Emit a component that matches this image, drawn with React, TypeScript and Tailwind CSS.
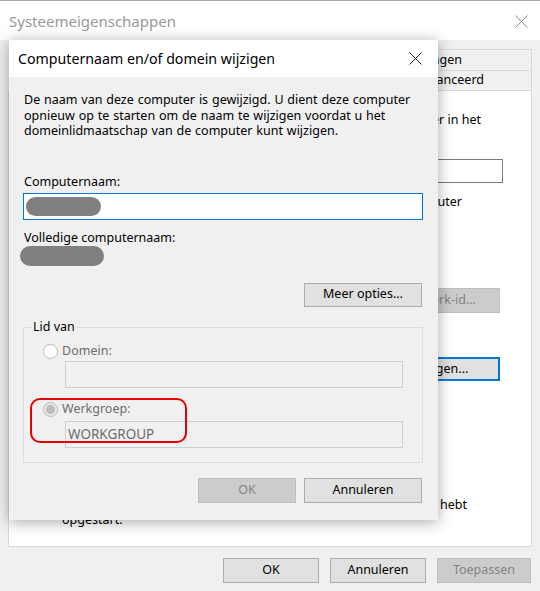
import React from 'react';

type BtnProps = {
  label: string;
  className?: string;
  disabled?: boolean;
  focused?: boolean;
};

// Classic Win32 push button
const Btn: React.FC<BtnProps> = ({ label, className = '', disabled, focused }) => {
  let look = 'bg-[#e1e1e1] border border-[#adadad] text-black';
  if (disabled) look = 'bg-[#cccccc] border border-[#bfbfbf] text-[#838383]';
  if (focused) look = 'bg-[#e1e1e1] border-2 border-[#0078d7] text-black';
  return (
    <div className={`flex items-center justify-center leading-none ${look} ${className}`}>
      {label}
    </div>
  );
};

const CloseIcon: React.FC<{ color: string }> = ({ color }) => (
  <svg width="13" height="13" viewBox="0 0 13 13">
    <path d="M0.5 0.5 L12.5 12.5 M12.5 0.5 L0.5 12.5" stroke={color} strokeWidth="1" fill="none" />
  </svg>
);

// Redacted value (blurred grey pill)
const Pill: React.FC<{ className: string }> = ({ className }) => (
  <div className={`rounded-full bg-[#808080] blur-[0.4px] ${className}`} />
);

// Row of the tab page whose left part sits under the dialog: only the right end shows
const PageRow: React.FC<{ className?: string; children: React.ReactNode }> = ({ className = '', children }) => (
  <div className={`ml-[428px] flex justify-end overflow-hidden whitespace-nowrap ${className}`}>{children}</div>
);

export default function App() {
  return (
    <div className="relative w-[540px] h-[591px] overflow-hidden bg-[#f0f0f0] font-['Noto_Sans',sans-serif] text-[12.5px] text-black">
      {/* Systeemeigenschappen window */}
      <div className="flex flex-col h-full">
        <div className="h-[2px] bg-white border-t border-[#a9a9a9] flex">
          <div className="ml-[48px] w-px h-[1px] bg-[#a9a9a9] -mt-px" />
        </div>
        <div className="h-[38px] bg-white flex items-center justify-between pl-[9px] pr-[12px]">
          <span className="text-[15px] text-[#999999]">Systeemeigenschappen</span>
          <CloseIcon color="#8a8a8a" />
        </div>

        <div className="flex-1 flex flex-col px-[8px] pt-[9px]">
          {/* tab rows */}
          <div className="h-[21px] ml-[429px] flex justify-end overflow-hidden whitespace-nowrap">
            <div className="shrink-0 border-t border-l border-r border-[#d9d9d9] pl-[40px] pr-[69px] flex items-center">Externe instellingen</div>
          </div>
          <div className="h-[20px] border-t border-[#d9d9d9] ml-[429px] flex justify-end overflow-hidden whitespace-nowrap">
            <div className="shrink-0 border-l border-r border-[#d9d9d9] pl-[60px] pr-[47px] flex items-center">Geavanceerd</div>
          </div>

          {/* tab page */}
          <div className="h-[457px] bg-white border border-[#d9d9d9] flex flex-col leading-[16px]">
            <PageRow className="mt-[21px] pr-[50px]">
              <span className="shrink-0">Windows gebruikt de volgende gegevens om deze computer in het</span>
            </PageRow>
            <div className="h-[16px]" />
            <div className="mt-[15px] flex justify-end pr-[28px]">
              <div className="w-[330px] h-[24px] border border-[#7a7a7a] bg-white" />
            </div>
            <PageRow className="mt-[11px] pr-[69px]">
              <span className="shrink-0">Bijvoorbeeld: Keukencomputer of Marieke's computer</span>
            </PageRow>
            <div className="mt-[78px] flex justify-end pr-[31px]">
              <Btn label="Netwerk-id..." disabled className="w-[123px] h-[25px]" />
            </div>
            <div className="mt-[44px] flex justify-end pr-[31px]">
              <Btn label="Wijzigen..." focused className="w-[123px] h-[24px]" />
            </div>
            <div className="mt-[116px] leading-[15px]">
              <PageRow className="pr-[64px]">
                <span className="shrink-0">De wijzigingen worden van kracht nadat u de computer opnieuw hebt</span>
              </PageRow>
              <div className="pl-[53px]">opgestart.</div>
            </div>
          </div>

          <div className="mt-[11px] flex justify-end gap-[11px] pr-[1px]">
            <Btn label="OK" className="w-[96px] h-[25px]" />
            <Btn label="Annuleren" className="w-[96px] h-[25px]" />
            <Btn label="Toepassen" disabled className="w-[94px] h-[25px]" />
          </div>
        </div>
      </div>

      {/* Computernaam en/of domein wijzigen dialog */}
      <div className="absolute left-[9px] top-[40px] w-[429px] h-[480px] flex flex-col bg-[#f0f0f0] shadow-[0_2px_14px_rgba(0,0,0,0.35)]">
        <div className="h-[37px] bg-white flex items-center justify-between pl-[9px] pr-[16px]">
          <span className="text-[14.2px]">Computernaam en/of domein wijzigen</span>
          <CloseIcon color="#1a1a1a" />
        </div>

        <div className="flex flex-col pl-[14px] pr-[15px] pt-[15px]">
          <div className="pl-[1px] leading-[15.5px] [word-spacing:0.6px]">
            De naam van deze computer is gewijzigd. U dient deze computer
            <br />
            opnieuw op te starten om de naam te wijzigen voordat u het
            <br />
            domeinlidmaatschap van de computer kunt wijzigen.
          </div>

          <div className="mt-[35px] pl-[1px] leading-[16px]">Computernaam:</div>
          <div className="mt-[3px] h-[27px] border border-[#0078d7] bg-white flex items-center pl-[2px]">
            <Pill className="w-[75px] h-[19px]" />
          </div>

          <div className="mt-[10px] pl-[1px] leading-[16px]">Volledige computernaam:</div>
          <Pill className="-ml-[3px] w-[84px] h-[20px]" />

          <div className="mt-[17px] flex justify-end pr-[1px]">
            <Btn label="Meer opties..." className="w-[118px] h-[24px]" />
          </div>

          {/* Lid van group box */}
          <div className="relative mt-[20px] h-[136px] border border-[#dcdcdc] flex flex-col pt-[16px] pl-[19px]">
            <span className="absolute -top-[9px] left-[7px] bg-[#f0f0f0] px-[2px] leading-[16px]">Lid van</span>

            <div className="h-[16px] flex items-center gap-[4px] text-[#6d6d6d]">
              <div className="w-[15px] h-[15px] rounded-full border border-[#bcbcbc] bg-white" />
              <span>Domein:</span>
            </div>
            <div className="mt-[1px] ml-[22px] w-[338px] h-[27px] border border-[#cfcfcf] bg-[#f0f0f0]" />

            <div className="mt-[14px] h-[16px] flex items-center gap-[4px] text-[#6d6d6d]">
              <div className="w-[15px] h-[15px] rounded-full border border-[#bcbcbc] bg-[#e6e6e6] flex items-center justify-center">
                <div className="w-[9px] h-[9px] rounded-full bg-[#bcbcbc]" />
              </div>
              <span>Werkgroep:</span>
            </div>
            <div className="mt-[3px] ml-[22px] w-[338px] h-[27px] border border-[#cfcfcf] bg-[#f0f0f0] flex items-center pl-[2px] text-[13.5px] text-[#6d6d6d]">
              WORKGROUP
            </div>

            {/* red highlight */}
            <div className="absolute left-[6px] top-[70px] w-[157px] h-[45px] rounded-[10px] border-2 border-[#e60000]" />
          </div>

          <div className="mt-[15px] flex justify-end gap-[8px] pr-[1px]">
            <Btn label="OK" disabled className="w-[98px] h-[25px]" />
            <Btn label="Annuleren" className="w-[118px] h-[25px]" />
          </div>
        </div>
      </div>
    </div>
  );
}
